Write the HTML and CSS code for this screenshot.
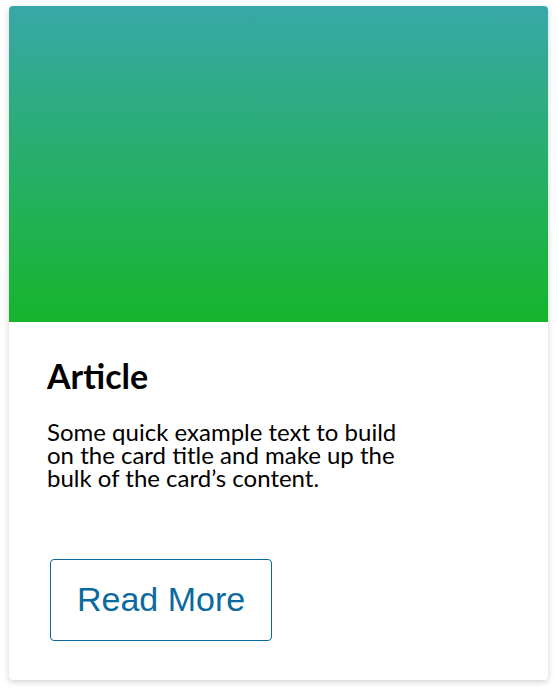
FILE: index.html
```html
<!DOCTYPE html>
<html>
<head>
<meta charset="utf-8">
<link rel="stylesheet" href="styles.css">
</head>
<body>
<div class="card">
  <div class="card-media"></div>
  <div class="card-body">
    <h2 class="card-title">Article</h2>
    <p class="card-text">Some quick example text to build on the card title and make up the bulk of the card’s content.</p>
    <a class="btn" href="#">Read More</a>
  </div>
</div>
</body>
</html>
```
FILE: styles.css
```css
html, body { margin: 0; padding: 0; background: #fff; }
body { padding: 6px 9px; }
.card {
  background: #fff;
  border-radius: 4px;
  box-shadow: 0 2px 6px rgba(0,0,0,0.18);
  overflow: hidden;
  height: 674px;
  display: flex;
  flex-direction: column;
}
.card-media {
  height: 316px;
  background: linear-gradient(to bottom, #38a8a8, #16b52c);
}
.card-body {
  padding: 34px 38px 0 38px;
  font-family: Lato, sans-serif;
  color: #000;
}
.card-title {
  margin: 0;
  font-size: 34px;
  font-weight: 700;
  line-height: 1.2;
}
.card-text {
  margin: 23px 0 0 0;
  font-size: 24px;
  line-height: 23px;
  max-width: 370px;
}
.btn {
  display: inline-block;
  margin: 70px 0 0 3px;
  padding: 20px 26px 21px;
  border: 1px solid #0a6a9e;
  border-radius: 4px;
  color: #0a6a9e;
  font-family: "Liberation Sans", Arial, sans-serif;
  font-size: 34px;
  text-decoration: none;
}
```
